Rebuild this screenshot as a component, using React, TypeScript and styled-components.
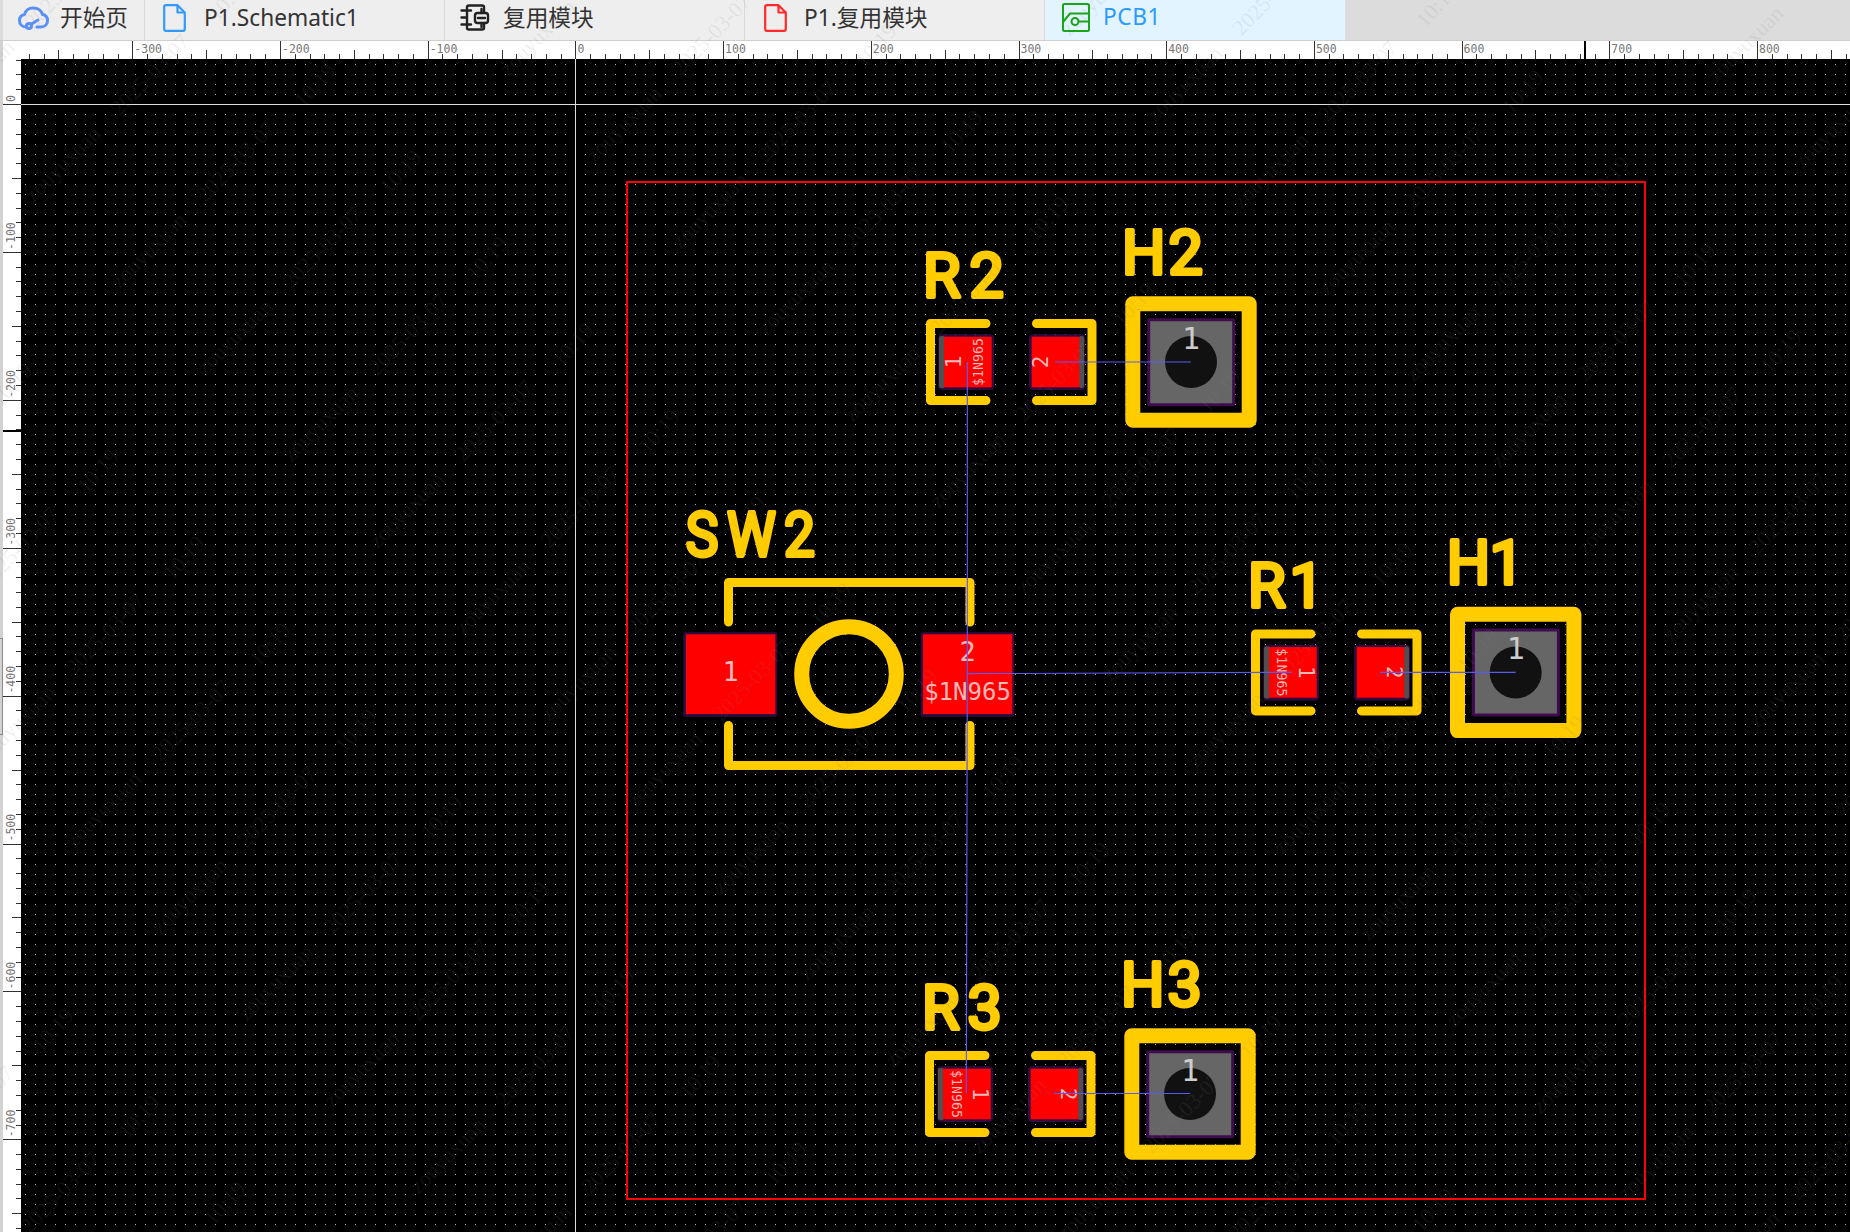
import * as React from "react";
import styled, { createGlobalStyle } from "styled-components";

const GlobalStyle = createGlobalStyle`
  html, body {
    margin: 0;
    padding: 0;
    background: #000;
  }
`;

const Page = styled.div`
  position: relative;
  width: 1850px;
  height: 1232px;
  overflow: hidden;
  display: flex;
  flex-direction: column;
  font-family: "Noto Sans", "Noto Sans CJK SC", sans-serif;
`;

const TabBar = styled.div`
  display: flex;
  height: 41px;
  box-sizing: border-box;
  padding-left: 3px;
  background: #dcdcdc;
  border-bottom: 1px solid #cfcfcf;
  flex: none;
`;

const Tab = styled.div<{ $active?: boolean; $width: number; $pad: number }>`
  width: ${(p) => p.$width}px;
  padding: 0 0 5px ${(p) => p.$pad}px;
  box-sizing: border-box;
  display: flex;
  align-items: center;
  background: ${(p) => (p.$active ? "#e1f4ff" : "#eeeeee")};
  border-right: 1px solid ${(p) => (p.$active ? "#e1f4ff" : "#dadada")};
`;

const TabLabel = styled.span<{ $active?: boolean; $gap: number }>`
  margin-left: ${(p) => p.$gap}px;
  margin-bottom: ${(p) => (p.$active ? "2px" : "0")};
  font-size: 22.7px;
  line-height: 30px;
  white-space: nowrap;
  letter-spacing: ${(p) => (p.$active ? "0.6px" : "0")};
  color: ${(p) => (p.$active ? "#2b9bff" : "#333333")};
`;

const Workspace = styled.div`
  flex: 1;
  display: flex;
  min-height: 0;
`;

const EdgeStrip = styled.div`
  width: 3px;
  flex: none;
  background: #d2d2d2;
  position: relative;
`;

const EdgeHandle = styled.div`
  position: absolute;
  left: 0;
  top: 597px;
  width: 2px;
  height: 95px;
  border: 1px solid #8a8a8a;
  border-left: none;
`;

const Stage = styled.div`
  flex: 1;
  display: grid;
  grid-template-columns: 18px 1fr;
  grid-template-rows: 18px 1fr;
  background: #fff;
`;

const RulerCorner = styled.div`
  background: #fff;
`;

const RulerSvg = styled.svg`
  display: block;
  background: #fff;
`;

const CanvasSvg = styled.svg`
  display: block;
  background: #000;
`;

const WatermarkLayer = styled.svg`
  position: absolute;
  left: 0;
  top: 0;
  pointer-events: none;
`;

const WatermarkText = styled.text`
  font-family: "Liberation Serif", serif;
  font-size: 22px;
  fill: rgba(130, 130, 130, 0.13);
`;

const TickPath = styled.path`
  fill: none;
  stroke: #333;
  stroke-width: 1;
  shape-rendering: crispEdges;
`;

const CursorMark = styled.line`
  stroke: #000;
  stroke-width: 2;
  shape-rendering: crispEdges;
`;

const RulerLabel = styled.text`
  font-family: "DejaVu Sans Mono", monospace;
  font-size: 11.5px;
  fill: #777;
`;

const CrossLine = styled.line`
  stroke: #dddddd;
  stroke-width: 1;
  shape-rendering: crispEdges;
`;

const BoardOutline = styled.rect`
  fill: none;
  stroke: #ff0000;
  stroke-width: 2;
  shape-rendering: crispEdges;
`;

const Silk = styled.path`
  fill: none;
  stroke: #ffcc00;
  stroke-width: 9;
  stroke-linecap: round;
  stroke-linejoin: round;
`;

const SilkRing = styled.circle`
  fill: none;
  stroke: #ffcc00;
  stroke-width: 15;
`;

const SilkFrame = styled.rect`
  fill: none;
  stroke: #ffcc00;
  stroke-width: 15;
  stroke-linejoin: round;
`;

const SilkLabel = styled.text`
  font-family: Roboto, "Liberation Sans", sans-serif;
  font-size: 61px;
  fill: #ffcc00;
  stroke: #ffcc00;
  stroke-width: 4;
  stroke-linejoin: round;
`;

const PadMask = styled.rect`
  fill: #330a40;
`;

const PadShade = styled.rect`
  fill: #505050;
`;

const PadCopper = styled.rect`
  fill: #ff0000;
`;

const PadText = styled.text<{ $size: number }>`
  font-family: "DejaVu Sans Mono", monospace;
  font-size: ${(p) => p.$size}px;
  fill: #ffb8b8;
  text-anchor: middle;
  dominant-baseline: central;
`;

const HolePad = styled.rect`
  fill: #666666;
  stroke: #3e0c4e;
  stroke-width: 3;
`;

const Hole = styled.circle`
  fill: #111111;
`;

const HoleText = styled.text`
  font-family: "DejaVu Sans Mono", monospace;
  font-size: 30px;
  fill: #cccccc;
  text-anchor: middle;
`;

const Net = styled.path`
  fill: none;
  stroke: #5a5af0;
  stroke-width: 1.2;
`;

const X0 = 575.4;
const Y0 = 104;
const STEP_X = 14.77;
const STEP_Y = 14.79;

function range(from: number, to: number) {
  const out: number[] = [];
  for (let i = from; i <= to; i++) out.push(i);
  return out;
}

function tickLength(k: number) {
  if (k % 10 === 0) return 18;
  if (k % 5 === 0) return 9;
  return 5;
}

const topTicks = range(-37, 86)
  .map((k) => {
    const x = Math.round(X0 + k * STEP_X) + 0.5;
    return `M${x} ${59 - tickLength(k)}V59`;
  })
  .join("");

const leftTicks = range(-3, 76)
  .map((k) => {
    const y = Math.round(Y0 + k * STEP_Y) + 0.5;
    return `M${21 - tickLength(k)} ${y}H21`;
  })
  .join("");

function CloudIcon() {
  return (
    <svg width="31" height="24" viewBox="0 0 31 24" fill="none" stroke="#5b8ff9" strokeWidth="3" strokeLinecap="round" strokeLinejoin="round">
      <path d="M8 21C4 21 1.5 18 1.5 14.500C1.500 11 4 9 6.500 8.500C7.500 4.500 11 2 15 2C20 2 23.500 5 24.500 8.500C27.500 9 29.500 11.500 29.500 14.500C29.500 18.500 26.500 21 23 21H19" />
      <circle cx="11" cy="20" r="2.500" />
      <path d="M13.500 18L20 14" />
    </svg>
  );
}

function DocIcon({ color }: { color: string }) {
  return (
    <svg width="23" height="28" viewBox="0 0 23 28" fill="none" stroke={color} strokeWidth="2.200" strokeLinejoin="round">
      <path d="M2.500 1.200H14.500L21.800 8.500V25C21.800 26 21 26.800 20 26.800H2.500C1.800 26.800 1.200 26 1.200 25V2.500C1.200 1.800 1.800 1.200 2.500 1.200Z" />
      <path d="M14.500 1.200V8.500H21.800" />
    </svg>
  );
}

function ChipIcon() {
  return (
    <svg width="30" height="27" viewBox="0 0 30 27" fill="none" stroke="#222" strokeWidth="2.400" strokeLinecap="round" strokeLinejoin="round">
      <path d="M7 5V3C7 2 8 1.500 9 1.500H22C23 1.500 24 2 24 3V8M7 22V24C7 25 8 25.500 9 25.500H22C23 25.500 24 25 24 24V19" />
      <path d="M1.500 6.500H11M1.500 13.500H7M1.500 20.500H11M7 6.500V20.500" />
      <rect x="15" y="9" width="13" height="10" rx="2.500" />
      <path d="M21.500 5V9M21.500 19V23M18 14H25" />
    </svg>
  );
}

function PcbIcon() {
  return (
    <svg width="28" height="29" viewBox="0 0 28 29" fill="none" stroke="#18a518" strokeWidth="2">
      <rect x="1" y="1" width="26" height="27" rx="1.500" />
      <path d="M1 19L8 10.500H27" />
      <circle cx="13" cy="18.500" r="3.500" />
      <path d="M16.500 18.500H27" />
    </svg>
  );
}

// label with each letter at its own spot, xs are page positions before the group shift
function Designator({ text, xs, baseline, squeeze = 1 }: { text: string; xs: number[]; baseline: number; squeeze?: number }) {
  const local = xs.map((x) => ((x - xs[0]) / squeeze).toFixed(1)).join(" ");
  return (
    <g transform={`translate(${xs[0]} ${baseline}) scale(${squeeze} 1)`}>
      <SilkLabel x={local} y="0">{text}</SilkLabel>
    </g>
  );
}

function Resistor({ shiftX, shiftY, rotation, net, one, two, label, labelXs }: {
  shiftX: number;
  shiftY: number;
  rotation: number;
  net: number;
  one: number;
  two: number;
  label: string;
  labelXs: number[];
}) {
  return (
    <g transform={`translate(${shiftX} ${shiftY})`}>
      <PadMask x="938.300" y="334.300" width="55.700" height="55.700" rx="4" />
      <PadShade x="939" y="336" width="6" height="52" rx="2" />
      <PadCopper x="944" y="336.700" width="47.700" height="50.600" />
      <PadMask x="1029" y="334.300" width="56" height="55.700" rx="4" />
      <PadShade x="1079" y="336" width="5" height="52" rx="2" />
      <PadCopper x="1031.700" y="336.700" width="47.600" height="50.600" />
      <PadText $size={21} x={one} y={362} transform={`rotate(${rotation} ${one} 362)`}>1</PadText>
      <PadText $size={21} x={two} y={362} transform={`rotate(${rotation} ${two} 362)`}>2</PadText>
      <PadText $size={13.300} x={net} y={362} transform={`rotate(${rotation} ${net} 362)`}>$1N965</PadText>
      <Silk d="M986 323.500H930.500V400.500H986" />
      <Silk d="M1036.500 323.500H1092V400.500H1036.500" />
      <Designator text={label} xs={labelXs} baseline={297} />
    </g>
  );
}

function MountingHole({ shiftX, shiftY, label, labelXs }: {
  shiftX: number;
  shiftY: number;
  label: string;
  labelXs: number[];
}) {
  return (
    <g transform={`translate(${shiftX} ${shiftY})`}>
      <SilkFrame x="1132.800" y="303.800" width="116.400" height="116.400" />
      <HolePad x="1148.700" y="319.700" width="85" height="85" rx="1" />
      <Hole cx="1191" cy="362" r="26" />
      <HoleText x="1191" y="349">1</HoleText>
      <Designator text={label} xs={labelXs} baseline={274} />
    </g>
  );
}

function Switch() {
  return (
    <g>
      <PadMask x="683.300" y="632.300" width="94" height="84.400" rx="2" />
      <PadCopper x="686" y="634.300" width="89.300" height="79.700" />
      <PadMask x="920.700" y="632.300" width="93.600" height="84.400" rx="2" />
      <PadCopper x="923" y="634.300" width="89.300" height="79.700" />
      <PadText $size={27} x={730.700} y={671}>1</PadText>
      <PadText $size={27} x={967.700} y={651}>2</PadText>
      <PadText $size={24} x={967.500} y={691.500}>$1N965</PadText>
      <Silk d="M728.500 622V582.500H970V622" />
      <Silk d="M728.500 725.500V765.500H970V725.500" />
      <SilkRing cx="849" cy="674" r="47.300" />
      <Designator text="SW2" xs={[685.700, 727, 784]} baseline={556} squeeze={0.9} />
    </g>
  );
}

// a watermark text runs up and to the right at 45deg, only keep what reaches the page
function reachesPage(x: number, y: number, length: number) {
  const reach = length * 0.72;
  return x + reach > 0 && x < 1850 && y > 0 && y - reach < 1232;
}

function Watermarks() {
  const marks: { x: number; y: number; angle: number; text: string; length: number }[] = [];
  range(-4, 4).forEach((i) => {
    range(-4, 18).forEach((j) => {
      const x = 33.400 + 561 * i + 86 * j;
      const y = 203.300 - 40 * i + 86.500 * j;
      marks.push({ x, y, angle: -45, text: "zouyuxuan", length: 97 });
      marks.push({ x: x + 172.200, y, angle: -46, text: "2025-03-07", length: 103 });
      marks.push({ x: x + 356, y: y - 8, angle: -48, text: "10:19", length: 50 });
    });
  });
  return (
    <WatermarkLayer width="1850" height="1232">
      {marks
        .filter((m) => reachesPage(m.x, m.y, m.length))
        .map((m, n) => (
          <WatermarkText key={n} transform={`translate(${m.x} ${m.y}) rotate(${m.angle})`}>
            {m.text}
          </WatermarkText>
        ))}
    </WatermarkLayer>
  );
}

export default function App() {
  return (
    <Page>
      <GlobalStyle />
      <TabBar>
        <Tab $width={142} $pad={15}>
          <CloudIcon />
          <TabLabel $gap={11}>开始页</TabLabel>
        </Tab>
        <Tab $width={300} $pad={18}>
          <DocIcon color="#3399ff" />
          <TabLabel $gap={18}>P1.Schematic1</TabLabel>
        </Tab>
        <Tab $width={300} $pad={15}>
          <ChipIcon />
          <TabLabel $gap={13}>复用模块</TabLabel>
        </Tab>
        <Tab $width={300} $pad={19}>
          <DocIcon color="#ff2a2a" />
          <TabLabel $gap={17}>P1.复用模块</TabLabel>
        </Tab>
        <Tab $active $width={300} $pad={17}>
          <PcbIcon />
          <TabLabel $active $gap={13}>PCB1</TabLabel>
        </Tab>
      </TabBar>
      <Workspace>
        <EdgeStrip>
          <EdgeHandle />
        </EdgeStrip>
        <Stage>
          <RulerCorner />
          <RulerSvg width="1829" height="18" viewBox="21 41 1829 18">
            <TickPath d={topTicks} />
            <CursorMark x1="1585" y1="41" x2="1585" y2="59" />
            {range(-3, 8).map((n) => (
              <RulerLabel key={n} x={X0 + n * 147.7 + 2} y={53}>{n * 100}</RulerLabel>
            ))}
          </RulerSvg>
          <RulerSvg width="18" height="1173" viewBox="3 59 18 1173">
            <TickPath d={leftTicks} />
            <CursorMark x1="3" y1="431" x2="21" y2="431" />
            {range(0, 7).map((n) => (
              <RulerLabel key={n} transform={`translate(15 ${Y0 + n * 147.9 - 2}) rotate(-90)`}>
                {n === 0 ? "0" : `-${n * 100}`}
              </RulerLabel>
            ))}
          </RulerSvg>
          <CanvasSvg width="1829" height="1173" viewBox="21 59 1829 1173">
            <defs>
              <pattern id="grid-dots" x="5" y="4" width="10" height="10" patternUnits="userSpaceOnUse">
                <rect width="1" height="1" fill="#acacac" />
              </pattern>
            </defs>
            <rect x="21" y="59" width="1829" height="1173" fill="url(#grid-dots)" />
            <CrossLine x1="21" y1="104.500" x2="1850" y2="104.500" />
            <CrossLine x1="575.500" y1="59" x2="575.500" y2="1232" />
            <BoardOutline x="627" y="182" width="1018" height="1017" />
            <Switch />
            <Resistor shiftX={0} shiftY={0} rotation={-90} net={978} one={954} two={1041} label="R2" labelXs={[923, 969.500]} />
            <Resistor shiftX={325} shiftY={310.400} rotation={90} net={956.500} one={981} two={1068.500} label="R1" labelXs={[923, 964.500]} />
            <Resistor shiftX={-1} shiftY={732} rotation={90} net={957.500} one={981.300} two={1069} label="R3" labelXs={[923, 968.600]} />
            <MountingHole shiftX={0} shiftY={0} label="H2" labelXs={[1122, 1168.500]} />
            <MountingHole shiftX={324.700} shiftY={310.400} label="H1" labelXs={[1122, 1164.800]} />
            <MountingHole shiftX={-1} shiftY={732} label="H3" labelXs={[1122, 1168.500]} />
            <Net d="M967.300 362V673.700L966.300 1093" />
            <Net d="M967.300 673.700L1291.700 672.300" />
            <Net d="M1055 362H1191" />
            <Net d="M1380 672.300H1515.700" />
            <Net d="M1054 1093.500H1190" />
          </CanvasSvg>
        </Stage>
      </Workspace>
      <Watermarks />
    </Page>
  );
}
